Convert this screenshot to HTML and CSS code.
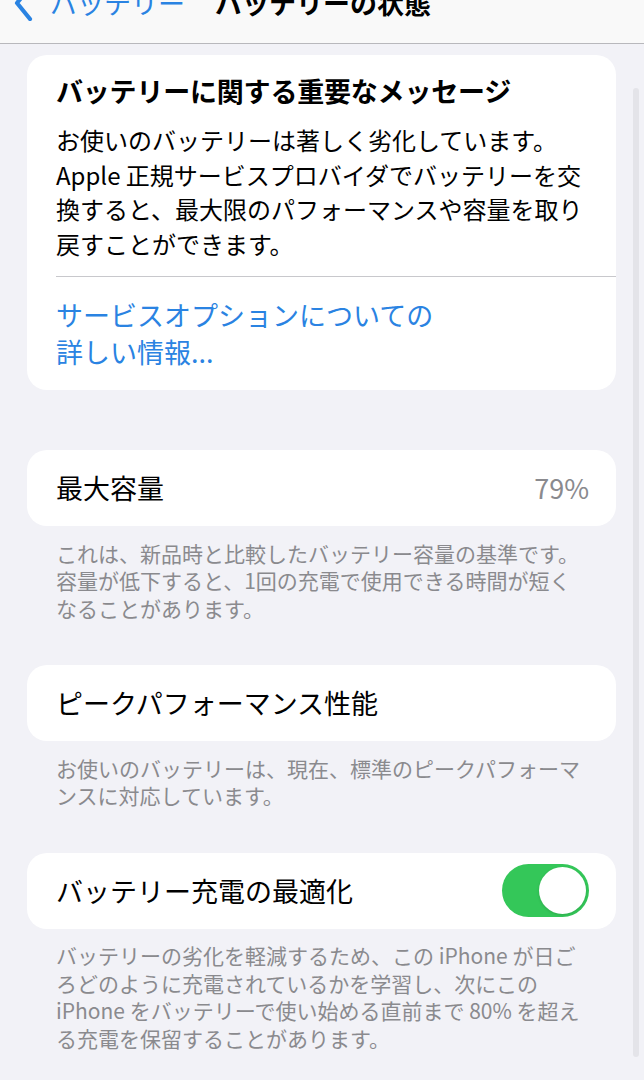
FILE: index.html
```html
<!DOCTYPE html>
<html lang="ja">
<head>
<meta charset="utf-8">
<title>バッテリーの状態</title>
<link rel="stylesheet" href="styles.css">
</head>
<body>
<header class="nav">
  <div class="nav-inner">
    <svg class="chev" width="22" height="36" viewBox="0 0 22 36" aria-hidden="true">
      <polyline points="17,2 4,18 17,34" fill="none" stroke="#2a83e2" stroke-width="4.2" stroke-linecap="round" stroke-linejoin="round"/>
    </svg>
    <span class="back">バッテリー</span>
    <span class="title">バッテリーの状態</span>
  </div>
</header>
<main class="page">
  <section class="card msg">
    <h2 class="msg-title">バッテリーに関する重要なメッセージ</h2>
    <p class="msg-body">お使いのバッテリーは著しく劣化しています。<br>Apple 正規サービスプロバイダでバッテリーを交<br>換すると、最大限のパフォーマンスや容量を取り<br>戻すことができます。</p>
    <div class="divider"></div>
    <p class="link">サービスオプションについての<br>詳しい情報...</p>
  </section>

  <section class="group first">
    <div class="card row">
      <span class="label">最大容量</span>
      <span class="value">79%</span>
    </div>
    <p class="foot">これは、新品時と比較したバッテリー容量の基準です。<br>容量が低下すると、1回の充電で使用できる時間が短く<br>なることがあります。</p>
  </section>

  <section class="group">
    <div class="card row">
      <span class="label">ピークパフォーマンス性能</span>
    </div>
    <p class="foot">お使いのバッテリーは、現在、標準のピークパフォーマ<br>ンスに対応しています。</p>
  </section>

  <section class="group">
    <div class="card row">
      <span class="label">バッテリー充電の最適化</span>
      <span class="toggle"><span class="knob"></span></span>
    </div>
    <p class="foot">バッテリーの劣化を軽減するため、この iPhone が日ご<br>ろどのように充電されているかを学習し、次にこの<br>iPhone をバッテリーで使い始める直前まで 80% を超え<br>る充電を保留することがあります。</p>
  </section>
</main>
<div class="scroll-ind"></div>
</body>
</html>
```

FILE: styles.css
```css
* { box-sizing: border-box; }
html, body {
  margin: 0;
  padding: 0;
}
body {
  background: #f2f2f7;
  font-family: "Noto Sans CJK JP", "Noto Sans", sans-serif;
  color: #000;
  width: 644px;
  height: 1080px;
  overflow: hidden;
  position: relative;
}
.nav {
  height: 44px;
  background: #f9f9f9;
  border-bottom: 1px solid #b8b8bc;
  overflow: hidden;
}
.nav-inner {
  display: flex;
  align-items: center;
  height: 38px;
  margin-top: -16px;
  padding-left: 13px;
}
.chev {
  display: block;
  flex: none;
}
.back {
  margin-left: 15px;
  font-size: 27px;
  line-height: 38px;
  color: #2a83e2;
}
.title {
  margin-left: 30px;
  font-size: 27px;
  line-height: 38px;
  font-weight: 700;
}
.page {
  padding: 11px 28px 0 27px;
}
.card {
  background: #fff;
  border-radius: 20px;
}
.msg {
  padding: 18px 0 20px 29px;
}
.msg-title {
  margin: 0;
  font-size: 27px;
  line-height: 36px;
  font-weight: 700;
  letter-spacing: -0.2px;
}
.msg-body {
  margin: 14px 0 0;
  padding-right: 6px;
  font-size: 24px;
  line-height: 34.5px;
  white-space: nowrap;
}
.divider {
  margin-top: 15px;
  height: 1px;
  background: #c8c8cc;
}
.link {
  margin: 19px 0 0;
  font-size: 27px;
  line-height: 37px;
  color: #2a83e2;
}
.group {
  margin-top: 43px;
}
.group.first {
  margin-top: 60px;
}
.row {
  height: 76px;
  display: flex;
  align-items: center;
  justify-content: space-between;
  padding: 0 27px 0 29px;
}
.label {
  font-size: 27px;
  line-height: 36px;
}
.value {
  font-size: 27px;
  line-height: 36px;
  color: #8a8a8e;
}
.toggle {
  width: 87px;
  height: 53px;
  border-radius: 27px;
  background: #34c759;
  display: flex;
  align-items: center;
  justify-content: flex-end;
  padding-right: 3px;
}
.knob {
  width: 47px;
  height: 47px;
  border-radius: 50%;
  background: #fff;
  box-shadow: 0 1px 3px rgba(0, 0, 0, 0.15);
}
.foot {
  margin: 0;
  padding: 13.5px 10px 0 29px;
  font-size: 21px;
  line-height: 27.5px;
  color: #8a8a8e;
  white-space: nowrap;
}
.scroll-ind {
  position: absolute;
  top: 88px;
  left: 633px;
  width: 6px;
  height: 969px;
  border-radius: 3px;
  background: #e4e4e9;
}
```
